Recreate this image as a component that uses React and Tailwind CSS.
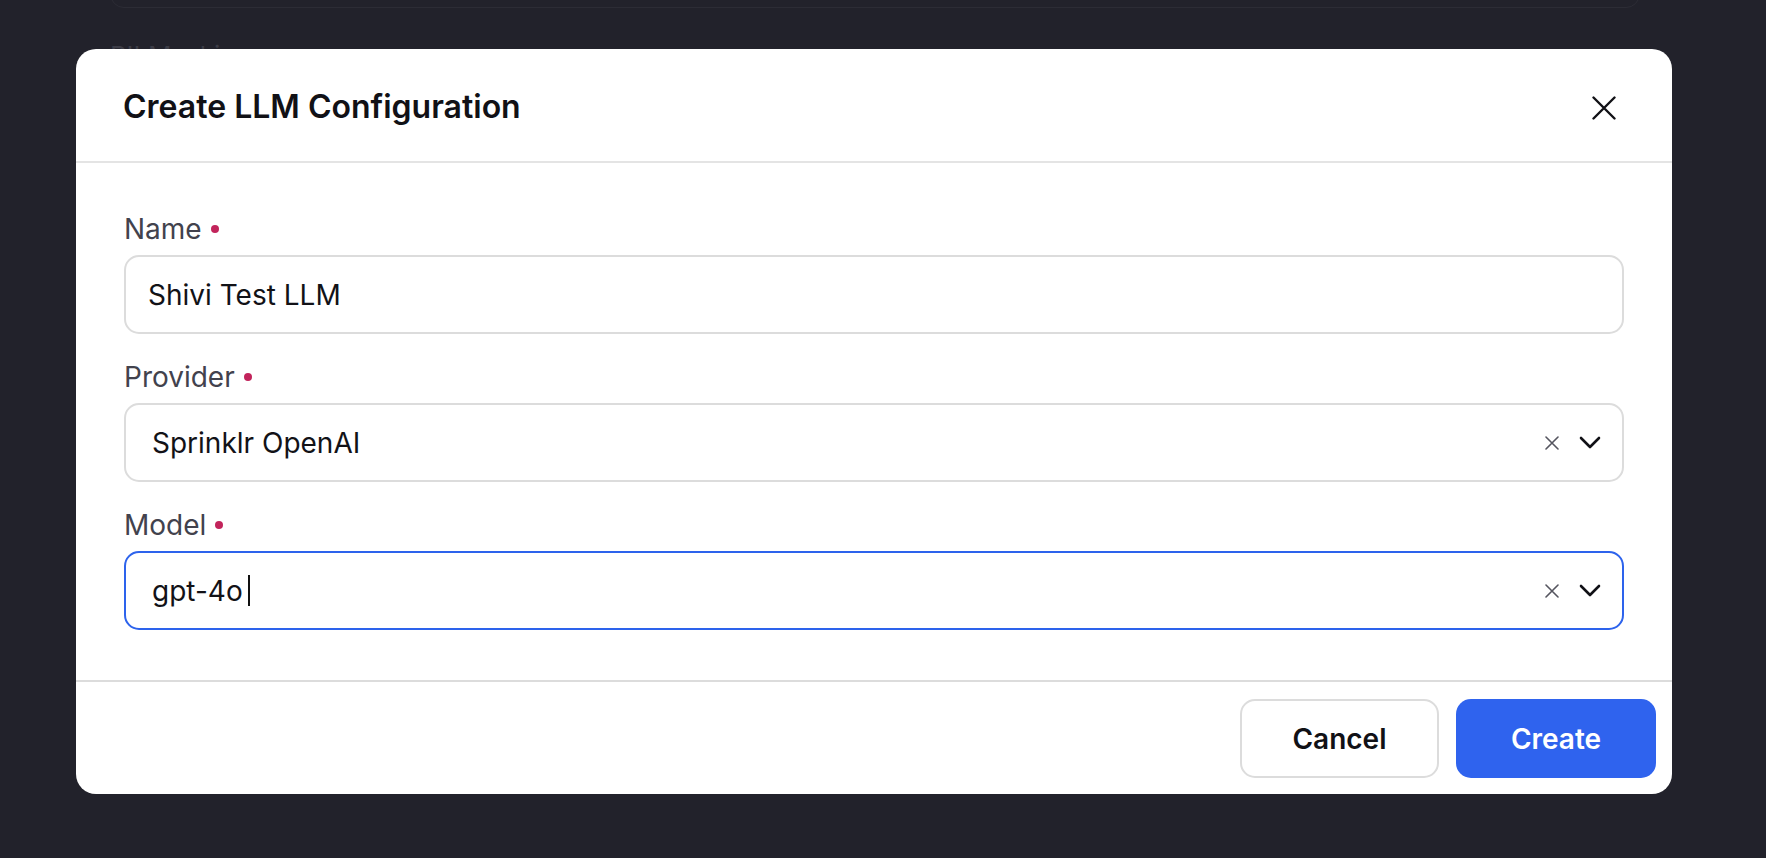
import React from 'react';

const font = { fontFamily: 'Inter, "Noto Sans", sans-serif' };

const CloseIcon = ({ className }) => (
  <svg viewBox="0 0 24 24" className={className} fill="none" stroke="currentColor" strokeWidth="2.4" strokeLinecap="round">
    <path d="M1.5 1.5 L22.5 22.5 M22.5 1.5 L1.5 22.5" />
  </svg>
);

const ClearIcon = () => (
  <svg viewBox="0 0 14 14" className="w-[14px] h-[14px] text-[#55555f]" fill="none" stroke="currentColor" strokeWidth="1.6" strokeLinecap="round">
    <path d="M1 1 L13 13 M13 1 L1 13" />
  </svg>
);

const Chevron = () => (
  <svg viewBox="0 0 22 13" className="w-[22px] h-[13px] text-[#111116]" fill="none" stroke="currentColor" strokeWidth="2.6" strokeLinecap="round" strokeLinejoin="round">
    <path d="M2 2 L11 11 L20 2" />
  </svg>
);

const Label = ({ children }) => (
  <div className="flex items-center gap-[9px] mb-2 text-[28px] leading-9 text-[#42424d]">
    <span>{children}</span>
    <span className="w-[8px] h-[8px] rounded-full bg-[#c2245b]" />
  </div>
);

const SelectBox = ({ value, focused }) => (
  <div
    className={
      focused
        ? 'flex items-center h-[79px] pl-[26px] pr-[21px] rounded-[15px] border-2 border-[#2d63ec] bg-white'
        : 'flex items-center h-[79px] pl-[26px] pr-[21px] rounded-[15px] border-2 border-[#dcdcdc] bg-white'
    }
  >
    <div className="flex-1 flex items-center text-[28px] text-[#121217]">
      <span>{value}</span>
      {focused && <span className="inline-block w-[2px] h-[31px] bg-[#111] ml-[5px]" />}
    </div>
    <div className="flex items-center gap-5">
      <ClearIcon />
      <Chevron />
    </div>
  </div>
);

export default function App() {
  return (
    <div className="relative w-full h-[858px] bg-[#22222b] overflow-hidden" style={font}>
      {/* page behind the overlay */}
      <div className="ml-[110px] mr-[126px] -mt-[40px] h-[48px] rounded-b-[14px] border border-[#2c2c35]" />
      <div className="ml-[110px] mt-[28px] text-[26px] text-[#3c3c46]">PII Masking</div>

      <div className="absolute left-[76px] top-[49px] w-[1596px] bg-white rounded-[20px] flex flex-col">
        <div className="h-[114px] flex items-center justify-between pl-[47px] pr-[56px] border-b-2 border-[#e4e4e4]">
          <h2 className="pt-[3px] text-[32px] font-semibold text-[#111116]">Create LLM Configuration</h2>
          <button className="text-[#111116] mt-[6px]">
            <CloseIcon className="w-6 h-6" />
          </button>
        </div>

        <div className="px-12 pt-12 pb-[50px] flex flex-col gap-[25px]">
          <div>
            <Label>Name</Label>
            <div className="flex items-center h-[79px] pl-[22px] rounded-[15px] border-2 border-[#dcdcdc] text-[28px] text-[#121217]">
              Shivi Test LLM
            </div>
          </div>
          <div>
            <Label>Provider</Label>
            <SelectBox value="Sprinklr OpenAI" />
          </div>
          <div>
            <Label>Model</Label>
            <SelectBox value="gpt-4o" focused />
          </div>
        </div>

        <div className="flex justify-end gap-[17px] px-4 pt-[17px] pb-4 border-t-2 border-[#dcdcdc]">
          <button className="w-[199px] h-[79px] rounded-[15px] border-2 border-[#dcdcdc] bg-white text-[28px] font-semibold text-[#111116]">
            Cancel
          </button>
          <button className="w-[200px] h-[79px] rounded-[15px] bg-[#2f63ee] text-[28px] font-semibold text-white">
            Create
          </button>
        </div>
      </div>
    </div>
  );
}
